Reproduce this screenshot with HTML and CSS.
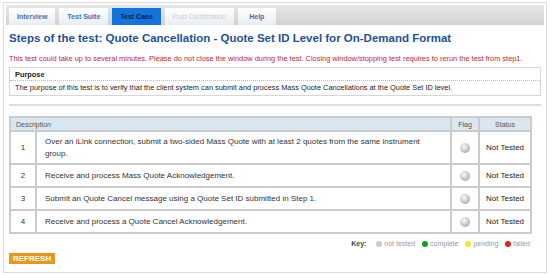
FILE: index.html
```html
<!DOCTYPE html>
<html lang="en">
<head>
    <meta charset="UTF-8">
    <title>Quote Cancellation - Test Case</title>
    <link rel="stylesheet" href="styles.css">
</head>
<body>
    <div class="page">
        <div class="tabs">
            <a class="tab">Interview</a>
            <a class="tab">Test Suite</a>
            <a class="tab active">Test Case</a>
            <a class="tab disabled">Post Certification</a>
            <a class="tab help">Help</a>
        </div>

        <div class="content">
            <h1 class="title">Steps of the test: Quote Cancellation - Quote Set ID Level for On-Demand Format</h1>
            <p class="warning">This test could take up to several minutes. Please do not close the window during the test. Closing window/stopping test requires to rerun the test from step1.</p>

            <div class="purpose">
                <div class="purpose-head">Purpose</div>
                <div class="purpose-body">The purpose of this test is to verify that the client system can submit and process Mass Quote Cancellations at the Quote Set ID level.</div>
            </div>

            <hr class="divider">

            <table class="steps">
                <thead>
                    <tr>
                        <th colspan="2" class="desc-head">Description</th>
                        <th class="flag-col">Flag</th>
                        <th class="status-col">Status</th>
                    </tr>
                </thead>
                <tbody>
                    <tr class="tall">
                        <td class="num">1</td>
                        <td class="desc">Over an iLink connection, submit a two-sided Mass Quote with at least 2 quotes from the same instrument group.</td>
                        <td class="flag"><span class="dot grey"></span></td>
                        <td class="status">Not Tested</td>
                    </tr>
                    <tr>
                        <td class="num">2</td>
                        <td class="desc">Receive and process Mass Quote Acknowledgement.</td>
                        <td class="flag"><span class="dot grey"></span></td>
                        <td class="status">Not Tested</td>
                    </tr>
                    <tr>
                        <td class="num">3</td>
                        <td class="desc">Submit an Quote Cancel message using a Quote Set ID submitted in Step 1.</td>
                        <td class="flag"><span class="dot grey"></span></td>
                        <td class="status">Not Tested</td>
                    </tr>
                    <tr>
                        <td class="num">4</td>
                        <td class="desc">Receive and process a Quote Cancel Acknowledgement.</td>
                        <td class="flag"><span class="dot grey"></span></td>
                        <td class="status">Not Tested</td>
                    </tr>
                </tbody>
            </table>

            <div class="key">
                <b>Key:</b>
                <span class="key-item"><span class="mini grey"></span>not tested</span>
                <span class="key-item"><span class="mini green"></span>complete</span>
                <span class="key-item"><span class="mini yellow"></span>pending</span>
                <span class="key-item"><span class="mini red"></span>failed</span>
            </div>

            <button class="refresh">REFRESH</button>
        </div>
    </div>
</body>
</html>
```

FILE: styles.css
```css
body {
    margin: 0;
    background: #fff;
    font-family: "Liberation Sans", Arial, sans-serif;
    color: #333;
}

.page {
    margin: 2px 3px 0 3px;
    height: 267px;
    border: 1px solid #dcdcdc;
    padding: 2px 2px 0 2px;
}

/* tab strip */
.tabs {
    display: flex;
    gap: 4px;
    height: 20px;
    padding: 3px 0 0 3px;
    box-sizing: border-box;
    background: linear-gradient(#e6e6e6, #d2d2d2);
}

.tab {
    display: flex;
    align-items: center;
    justify-content: center;
    padding: 0 8px;
    background: linear-gradient(#ffffff, #e9eef2);
    color: #3c72b4;
    font-size: 7px;
    font-weight: bold;
    cursor: pointer;
}

.tab.active {
    background: #1374dc;
    color: #0a2340;
}

.tab.disabled {
    color: #c9ced6;
    font-weight: normal;
}

.tab.help {
    min-width: 22px;
}

.content {
    padding: 0 3px;
}

.title {
    margin: 7px 0 0 0;
    font-size: 11.5px;
    color: #1d5196;
}

.warning {
    margin: 10px 0 0 0;
    font-size: 7.4px;
    color: #c2262f;
}

/* purpose box */
.purpose {
    margin-top: 4px;
    border: 1px solid #d6d6d6;
    font-size: 7.4px;
}

.purpose-head {
    padding: 2px 5px 1px;
    font-weight: bold;
    color: #222;
    border-bottom: 1px dotted #bbb;
}

.purpose-body {
    padding: 2px 5px 3px;
    color: #222;
}

.divider {
    margin: 8px 0 0 0;
    border: none;
    border-top: 2px solid #ddd;
}

/* steps table */
.steps {
    margin-top: 10px;
    width: 523px;
    border-collapse: collapse;
    font-size: 8px;
    color: #333;
}

.steps th,
.steps td {
    border: 2px solid #cbcbcb;
}

.steps th {
    height: 10px;
    background: #d8e7f1;
    font-size: 7px;
    font-weight: normal;
    color: #555;
    text-align: center;
}

.steps th.desc-head {
    text-align: left;
    padding-left: 5px;
}

.flag-col {
    width: 24px;
}

.status-col {
    width: 48px;
}

.steps td {
    height: 19px;
}

.steps tr.tall td {
    height: 29px;
}

.num {
    width: 22px;
    text-align: center;
}

.desc {
    padding: 0 22px 0 8px;
    line-height: 12px;
}

.flag {
    text-align: center;
}

.status {
    text-align: center;
    color: #222;
}

.dot {
    display: inline-block;
    width: 10px;
    height: 10px;
    border-radius: 50%;
    vertical-align: middle;
}

.dot.grey {
    background: radial-gradient(circle at 40% 35%, #fafafa, #c4c4c4 55%, #8c8c8c);
}

/* legend */
.key {
    margin-top: 6px;
    width: 521px;
    text-align: right;
    font-size: 7px;
    color: #999;
}

.key b {
    color: #444;
    margin-right: 3px;
}

.key-item {
    margin-left: 5px;
}

.mini {
    display: inline-block;
    width: 6px;
    height: 6px;
    border-radius: 50%;
    margin-right: 2px;
    vertical-align: -1px;
}

.mini.grey { background: #c8c8c8; }
.mini.green { background: #12a018; }
.mini.yellow { background: #f3ea2a; }
.mini.red { background: #e3261c; }

.refresh {
    display: block;
    margin-top: 6px;
    padding: 1px 4px;
    border: none;
    background: #e9971c;
    color: #fff;
    font-family: "Liberation Sans", Arial, sans-serif;
    font-size: 8px;
    font-weight: bold;
    cursor: pointer;
}
```
